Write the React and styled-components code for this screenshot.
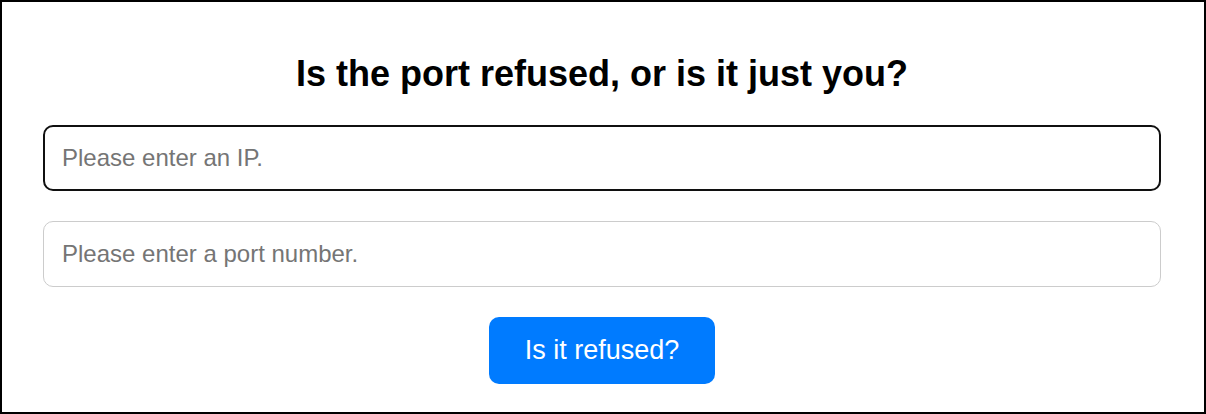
import React from 'react';
import styled, { createGlobalStyle } from 'styled-components';

const GlobalStyle = createGlobalStyle`
  html, body {
    margin: 0;
    padding: 0;
    background: #fff;
  }

  body {
    font-family: "Liberation Sans", Arial, sans-serif;
  }

  * {
    box-sizing: border-box;
  }
`;

const Page = styled.div`
  width: 1206px;
  height: 414px;
  border: 2px solid #000;
  padding: 51px 43px 0 41px;
  display: flex;
  flex-direction: column;
  align-items: center;
`;

const Title = styled.h1`
  margin: 0 0 31px 0;
  font-size: 36px;
  font-weight: 700;
  line-height: 41px;
  color: #000;
  text-align: center;
`;

const Form = styled.form`
  width: 100%;
  display: flex;
  flex-direction: column;
  align-items: center;
  gap: 30px;
`;

const TextInput = styled.input`
  width: 100%;
  height: 66px;
  padding: 0 18px;
  border: 1px solid #ccc;
  border-radius: 10px;
  font-family: inherit;
  font-size: 24px;
  color: #222;
  background: #fff;
  outline: none;

  &::placeholder {
    color: #757575;
  }

  &:focus {
    border: 2px solid #101010;
    padding: 0 17px;
  }
`;

const SubmitButton = styled.button`
  width: 226px;
  height: 67px;
  border: none;
  border-radius: 10px;
  background: #007bff;
  color: #fff;
  font-family: inherit;
  font-size: 27px;
  cursor: pointer;
`;

const App = () => {
  const onSubmit = (e) => {
    e.preventDefault();
  };

  return (
    <>
      <GlobalStyle />
      <Page>
        <Title>Is the port refused, or is it just you?</Title>
        <Form onSubmit={onSubmit}>
          <TextInput name="ip" placeholder="Please enter an IP." autoFocus />
          <TextInput name="port" placeholder="Please enter a port number." />
          <SubmitButton type="submit">Is it refused?</SubmitButton>
        </Form>
      </Page>
    </>
  );
};

export default App;
